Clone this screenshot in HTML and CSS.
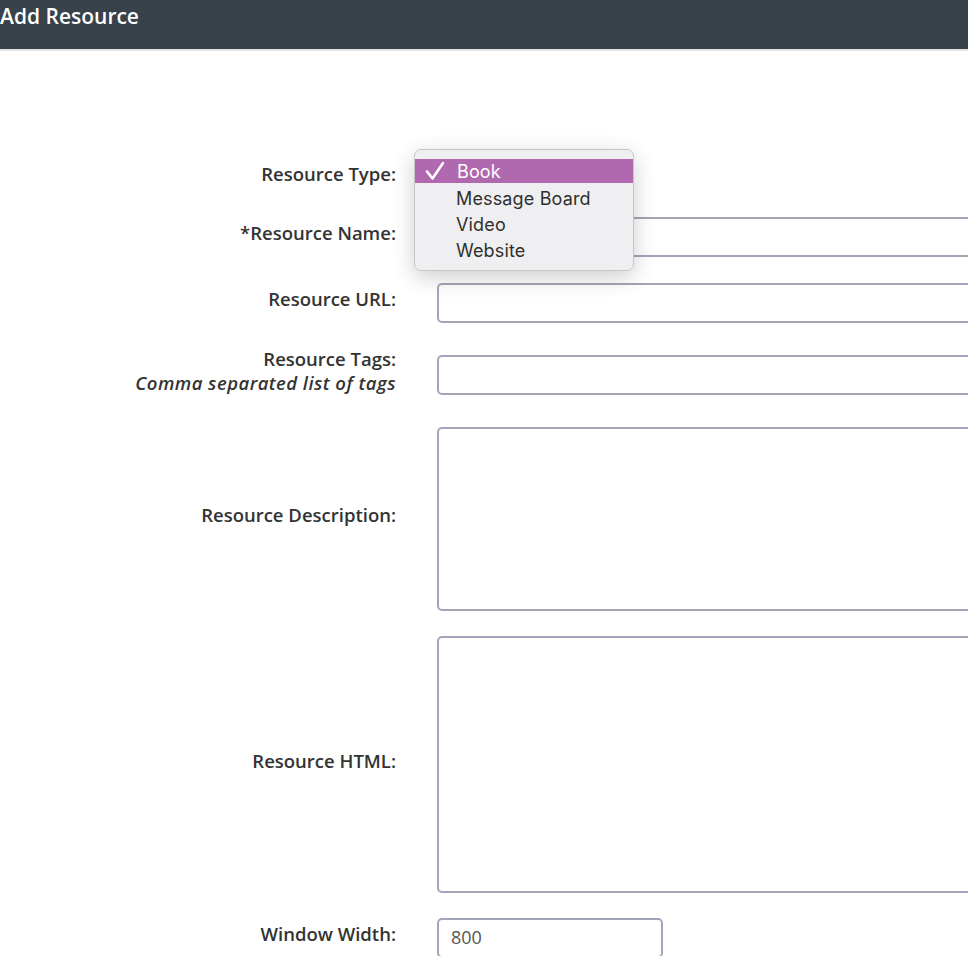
FILE: index.html
```html
<!DOCTYPE html>
<html lang="en">

<head>
    <meta charset="UTF-8">
    <meta name="viewport" content="width=device-width, initial-scale=1.0">
    <title>Add Resource</title>
    <link rel="stylesheet" href="styles.css">
</head>

<body>
    <header class="page__header">
        <h1>Add Resource</h1>
    </header>
    <main class="container">
        <form class="resource__form">
            <div class="row row--type">
                <label for="type">Resource Type:</label>
                <div class="field">
                    <select id="type" class="select">
                        <option selected>Book</option>
                        <option>Message Board</option>
                        <option>Video</option>
                        <option>Website</option>
                    </select>
                    <!-- open option list -->
                    <ul class="menu">
                        <li class="menu__item is-selected">
                            <svg class="check" width="20" height="20" viewBox="0 0 20 20">
                                <path d="M2 10.5 L7.5 17.5 L18 2" fill="none" stroke="#fff" stroke-width="2.6" stroke-linecap="round" stroke-linejoin="round" />
                            </svg>Book
                        </li>
                        <li class="menu__item">Message Board</li>
                        <li class="menu__item">Video</li>
                        <li class="menu__item">Website</li>
                    </ul>
                </div>
            </div>
            <div class="row row--name">
                <label for="name">*Resource Name:</label>
                <div class="field"><input type="text" id="name" class="input"></div>
            </div>
            <div class="row row--url">
                <label for="url">Resource URL:</label>
                <div class="field"><input type="text" id="url" class="input"></div>
            </div>
            <div class="row row--tags">
                <label for="tags">Resource Tags:<em>Comma separated list of tags</em></label>
                <div class="field"><input type="text" id="tags" class="input"></div>
            </div>
            <div class="row row--desc">
                <label for="desc">Resource Description:</label>
                <div class="field"><textarea id="desc" class="input area area--desc"></textarea></div>
            </div>
            <div class="row row--html">
                <label for="html">Resource HTML:</label>
                <div class="field"><textarea id="html" class="input area area--html"></textarea></div>
            </div>
            <div class="row row--width">
                <label for="width">Window Width:</label>
                <div class="field"><input type="text" id="width" class="input input--small" value="800"></div>
            </div>
        </form>
    </main>
</body>

</html>
```

FILE: styles.css
```css
html,
body {
    margin: 0;
    overflow: hidden;
    height: 956px;
}

body {
    font-family: "Open Sans", "Liberation Sans", sans-serif;
    color: #333;
    background: #fff;
}

.page__header {
    height: 49px;
    background-color: #37424a;
    border-bottom: 2px solid #e2e2e2;
}

.page__header h1 {
    margin: 0;
    padding-top: 3px;
    font-size: 21px;
    font-weight: 600;
    line-height: 26px;
    color: #fff;
}

.container {
    width: 1200px;
}

.resource__form {
    display: flex;
    flex-direction: column;
    padding-top: 107px;
}

.row {
    display: grid;
    grid-template-columns: 396px 700px;
    column-gap: 41px;
    align-items: center;
}

.row label {
    text-align: right;
    font-size: 18.5px;
    font-weight: 600;
    line-height: 24px;
    margin-top: -8px;
    white-space: nowrap;
}

.row label em {
    display: block;
    font-weight: 600;
    letter-spacing: 0.45px;
}

.row--name { margin-top: 19px; }
.row--url { margin-top: 26px; }
.row--tags { margin-top: 32px; }
.row--desc { margin-top: 32px; }
.row--html { margin-top: 25px; }
.row--width { margin-top: 25px; }

.field {
    position: relative;
}

.row--type .field {
    z-index: 2;
}

.input,
.select {
    display: block;
    box-sizing: border-box;
    width: 100%;
    height: 40px;
    margin: 0;
    padding: 4px 12px 6px;
    border: 2px solid #a3a6b8;
    border-radius: 5px;
    background: #fff;
    font-family: inherit;
    font-size: 18px;
    color: #555;
    outline: none;
}

.select {
    width: 190px;
}

.area {
    resize: none;
}

.area--desc {
    height: 184px;
}

.area--html {
    height: 257px;
}

.input--small {
    width: 226px;
}

/* native-looking popup for the type select */
.menu {
    position: absolute;
    left: -23px;
    top: -9px;
    width: 220px;
    box-sizing: border-box;
    margin: 0;
    padding: 9px 0 7px;
    list-style: none;
    background: #efeff1;
    border: 1px solid #c6c6c8;
    border-radius: 7px;
    box-shadow: 0 6px 22px rgba(0, 0, 0, 0.2);
    font-family: Inter, "Noto Sans", sans-serif;
    font-size: 18px;
    color: #2f2f2f;
}

.menu__item {
    display: flex;
    align-items: center;
    height: 26px;
    padding-left: 41px;
    letter-spacing: 0.15px;
}

.menu__item.is-selected {
    height: 24px;
    margin-bottom: 2px;
    padding-left: 10px;
    background-color: #b069ae;
    color: #fff;
}

.check {
    margin-right: 12px;
}
```
